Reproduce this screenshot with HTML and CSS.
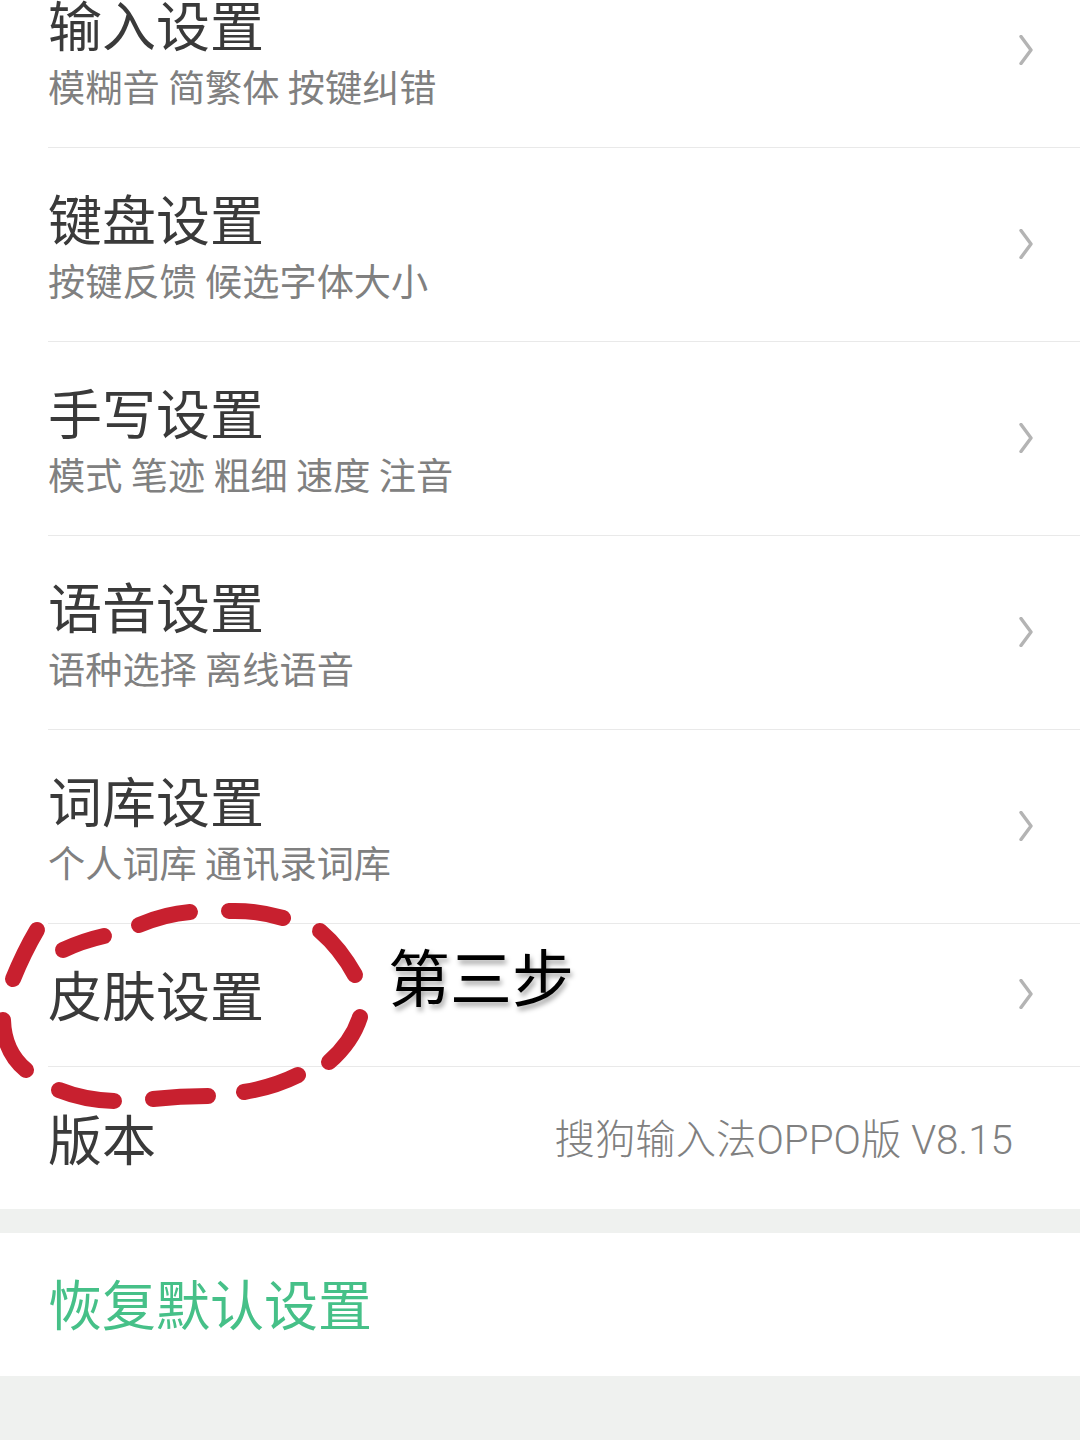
FILE: index.html
```html
<!DOCTYPE html>
<html lang="zh-CN">
<head>
<meta charset="utf-8">
<title>设置</title>
<link rel="stylesheet" href="styles.css">
</head>
<body>
<main class="page">
  <section class="list">
    <div class="row row-tall">
      <div class="text"><div class="title">输入设置</div><div class="sub">模糊音 简繁体 按键纠错</div></div>
      <svg class="chev" viewBox="0 0 14 30"><path d="M2 1.5 L12 15 L2 28.5"/></svg>
    </div>
    <div class="row row-tall">
      <div class="text"><div class="title">键盘设置</div><div class="sub">按键反馈 候选字体大小</div></div>
      <svg class="chev" viewBox="0 0 14 30"><path d="M2 1.5 L12 15 L2 28.5"/></svg>
    </div>
    <div class="row row-tall">
      <div class="text"><div class="title">手写设置</div><div class="sub">模式 笔迹 粗细 速度 注音</div></div>
      <svg class="chev" viewBox="0 0 14 30"><path d="M2 1.5 L12 15 L2 28.5"/></svg>
    </div>
    <div class="row row-tall">
      <div class="text"><div class="title">语音设置</div><div class="sub">语种选择 离线语音</div></div>
      <svg class="chev" viewBox="0 0 14 30"><path d="M2 1.5 L12 15 L2 28.5"/></svg>
    </div>
    <div class="row row-tall">
      <div class="text"><div class="title">词库设置</div><div class="sub">个人词库 通讯录词库</div></div>
      <svg class="chev" viewBox="0 0 14 30"><path d="M2 1.5 L12 15 L2 28.5"/></svg>
    </div>
    <div class="row row-short">
      <div class="title title-low">皮肤设置</div>
      <svg class="chev" viewBox="0 0 14 30"><path d="M2 1.5 L12 15 L2 28.5"/></svg>
    </div>
    <div class="row row-version">
      <div class="title">版本</div>
      <div class="value">搜狗输入法OPPO版 V8.15</div>
    </div>
  </section>
  <section class="restore">恢复默认设置</section>
  <div class="footer"></div>

  <svg class="marks" viewBox="0 0 1080 1440">
    <path d="M37 930 Q24 952 13 979"/>
    <path d="M63 950 Q82 941 104 936"/>
    <path d="M139 925 Q165 914 190 912"/>
    <path d="M229 911 Q256 910 283 918"/>
    <path d="M320 931 Q340 948 355 975"/>
    <path d="M360 1017 Q352 1042 329 1062"/>
    <path d="M298 1075 Q274 1087 244 1092"/>
    <path d="M208 1096 Q180 1096 153 1099"/>
    <path d="M114 1101 Q84 1100 59 1090"/>
    <path d="M26 1070 Q4 1052 3 1020"/>
  </svg>
  <div class="note">第三步</div>
</main>
</body>
</html>
```
FILE: styles.css
```css
html, body {
  margin: 0;
  padding: 0;
}
.page {
  position: relative;
  width: 1080px;
  height: 1440px;
  overflow: hidden;
  background: #eff1ef;
  display: flex;
  flex-direction: column;
  font-family: "Noto Sans CJK SC", "Noto Sans", sans-serif;
  font-weight: 400;
}
.list {
  margin-top: -46px;
  background: #fff;
}
.row {
  box-sizing: border-box;
  margin-left: 48px;
  padding-right: 47px;
  display: flex;
  align-items: center;
  justify-content: space-between;
  border-bottom: 1px solid #e9e9e9;
}
.row-tall { height: 194px; }
.row-short { height: 143px; }
.row-version { height: 142px; border-bottom: 0; padding-right: 67px; }
.text { padding-top: 8px; }
.title {
  font-size: 54px;
  line-height: 62px;
  color: #3a3a3a;
  white-space: nowrap;
}
.title-low { padding-bottom: 3px; }
.sub {
  font-size: 37.2px;
  line-height: 62px;
  color: #808080;
  white-space: nowrap;
}
.value {
  font-family: Roboto, "Noto Sans CJK SC", sans-serif;
  font-size: 40.4px;
  font-weight: 300;
  line-height: 62px;
  color: #808080;
  white-space: nowrap;
  padding-top: 6px;
}
.chev {
  width: 14px;
  height: 30px;
  flex: none;
  margin-bottom: 2px;
  fill: none;
  stroke: #b4b4b4;
  stroke-width: 3.4;
  stroke-linecap: round;
  stroke-linejoin: round;
}
.restore {
  box-sizing: border-box;
  height: 143px;
  margin-top: 24px;
  padding-left: 48px;
  padding-bottom: 4px;
  display: flex;
  align-items: center;
  font-size: 54px;
  color: #46c088;
  background: #fff;
}
.footer {
  flex: 1;
  background: #eff1ef;
}
.marks {
  position: absolute;
  left: 0;
  top: 0;
  width: 1080px;
  height: 1440px;
  fill: none;
  stroke: #c8202f;
  stroke-width: 16;
  stroke-linecap: round;
}
.note {
  position: absolute;
  left: 388px;
  top: 931px;
  font-size: 62px;
  line-height: 88px;
  color: #000;
  text-shadow: 2px 4px 5px rgba(0, 0, 0, 0.35);
  white-space: nowrap;
}
```
